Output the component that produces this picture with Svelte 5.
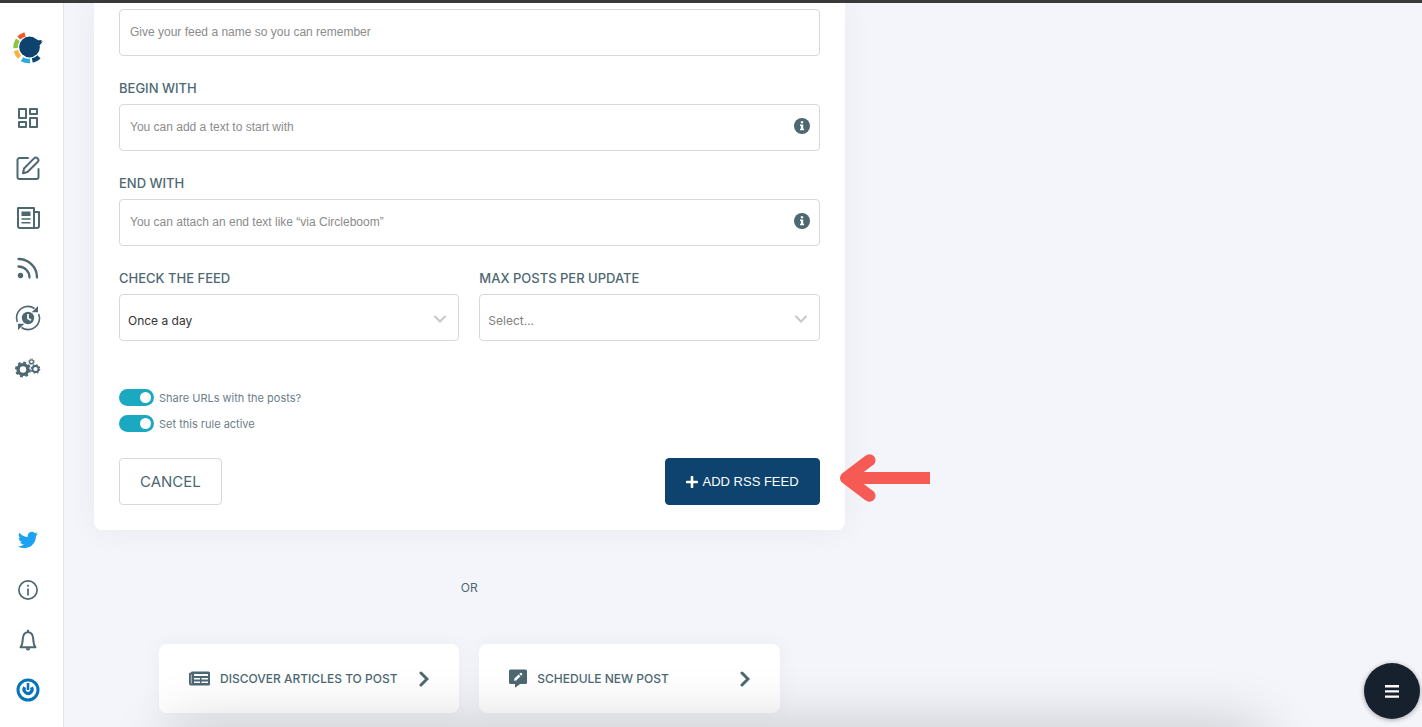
<script>
  let feedName = "";
  let beginWith = "";
  let endWith = "";
  let interval = "Once a day";
  let maxPosts = "";
  let shareUrls = true;
  let active = true;

  const intervals = ["Once a day", "Twice a day", "Every hour"];
  const limits = ["1", "2", "3", "5", "10"];
</script>

<div class="topbar"></div>
<div class="layout">
  <nav class="sidebar">
    <a href="#home" class="logo" aria-label="Home">
      <svg width="30" height="34" viewBox="0 0 30 34">
        <path fill="none" stroke="#f15a29" stroke-width="4.500" d="M5.800 7A13.500 13.500 0 0 1 12 3.300" />
        <path fill="none" stroke="#8cc63f" stroke-width="4.500" d="M2.600 17.200A13.500 13.500 0 0 1 4.800 8.800" />
        <path fill="none" stroke="#fbb03b" stroke-width="4.500" d="M6.500 26.300A13.500 13.500 0 0 1 3 19.500" />
        <path fill="none" stroke="#29abe2" stroke-width="4.500" d="M17 30A13.500 13.500 0 0 1 9 28.200" />
        <path fill="none" stroke="#0e4370" stroke-width="4.500" d="M26 25.800A13.500 13.500 0 0 1 19.300 29.500" />
        <circle cx="16.500" cy="16" r="10.400" fill="#0e4370" />
        <path fill="#0e4370" d="M22 7.500 25 9.200 29 9 27.800 10.600 29.800 10.500 26.500 14.500Z" />
      </svg>
    </a>

    <a href="#dashboard" aria-label="Dashboard">
      <svg width="22" height="22" viewBox="0 0 22 22" fill="none" stroke="currentColor" stroke-width="2" stroke-linejoin="round">
        <path d="M2 2h7v9H2zM13 2h7v5h-7zM2 15h7v5H2zM13 11h7v9h-7z" />
      </svg>
    </a>
    <a href="#compose" aria-label="Create post">
      <svg width="24" height="24" viewBox="0 0 24 24" fill="none" stroke="currentColor" stroke-width="2" stroke-linecap="round" stroke-linejoin="round">
        <path d="M12 2H3.500A2 2 0 0 0 1.500 4v17a2 2 0 0 0 2 2h17a2 2 0 0 0 2-2v-8" />
        <path d="M8 12.500 18 2.400a2.500 2.500 0 0 1 3.600 3.600L11.500 16 7 17.300z" />
      </svg>
    </a>
    <a href="#articles" aria-label="Articles">
      <svg width="24" height="24" viewBox="0 0 24 24" fill="none" stroke="currentColor" stroke-width="2" stroke-linejoin="round">
        <path d="M18 22V2H2v18a2 2 0 0 0 2 2h17a2 2 0 0 0 2-2V6h-5" />
        <path fill="currentColor" stroke="none" d="M5.500 5.500h9v4.500h-9zM5.500 12.200h9v1.600h-9zM5.500 16h9v1.600h-9z" />
      </svg>
    </a>
    <a href="#rss" aria-label="RSS feeds">
      <svg width="22" height="22" viewBox="0 0 22 22" fill="none" stroke="currentColor" stroke-width="2.300">
        <circle cx="3.500" cy="18.500" r="2.700" fill="currentColor" stroke="none" />
        <path d="M1.500 9.500A11 11 0 0 1 12.500 20.500M1.500 2A18.500 18.500 0 0 1 20 20.500" stroke-linecap="round" />
      </svg>
    </a>
    <a href="#queue" aria-label="Queue">
      <svg width="26" height="26" viewBox="0 0 26 26">
        <circle cx="13" cy="13" r="6.200" fill="currentColor" />
        <path d="M13 9v4.500l3 1.800" fill="none" stroke="#fff" stroke-width="1.700" />
        <path d="M2.300 17A11.400 11.400 0 0 1 19.500 3.500M23.700 9A11.400 11.400 0 0 1 6.500 22.500" fill="none" stroke="currentColor" stroke-width="1.600" />
        <path fill="currentColor" d="M23 1V7.300h-6.300zM3 25V18.700h6.300z" />
      </svg>
    </a>
    <a href="#settings" aria-label="Settings">
      <svg width="26" height="20" viewBox="0 0 26 20" fill="none" stroke="currentColor">
        <circle cx="8" cy="11.500" r="4.900" stroke-width="3.400" />
        <circle cx="8" cy="11.500" r="7" stroke-width="2" stroke-dasharray="2.900 2.600" />
        <circle cx="20.500" cy="11" r="3" stroke-width="1.800" />
        <circle cx="20.500" cy="11" r="4.200" stroke-width="1.200" stroke-dasharray="1.700 1.600" />
        <circle cx="16.500" cy="3.700" r="1.900" stroke-width="1.200" />
        <circle cx="16.500" cy="3.700" r="2.800" stroke-width=".8" stroke-dasharray="1.200 1" />
      </svg>
    </a>

    <div class="spacer"></div>

    <a href="#twitter" aria-label="Twitter">
      <svg width="20" height="20" viewBox="0 0 24 24" fill="#1da1f2">
        <path d="M23.950 4.570a10 10 0 0 1-2.820.78 4.960 4.960 0 0 0 2.160-2.730 9.900 9.900 0 0 1-3.120 1.190 4.920 4.920 0 0 0-8.390 4.490A14 14 0 0 1 1.640 3.160a4.920 4.920 0 0 0 1.520 6.570 4.900 4.900 0 0 1-2.230-.61v.06a4.920 4.920 0 0 0 3.950 4.830 5 5 0 0 1-2.210.08 4.940 4.940 0 0 0 4.600 3.420A9.870 9.870 0 0 1 0 19.540a13.990 13.990 0 0 0 7.550 2.210c9.050 0 14-7.500 14-13.980 0-.21 0-.42-.02-.63a9.940 9.940 0 0 0 2.420-2.570z" />
      </svg>
    </a>
    <a href="#help" aria-label="Help">
      <svg width="20" height="20" viewBox="0 0 20 20" fill="none" stroke="currentColor" stroke-width="1.700">
        <circle cx="10" cy="10" r="9.100" />
        <path d="M10 8.500v7M10 4.700v2" />
      </svg>
    </a>
    <a href="#notifications" aria-label="Notifications">
      <svg width="18" height="22" viewBox="0 0 18 22" fill="none" stroke="currentColor" stroke-width="2" stroke-linejoin="round">
        <path d="M1.500 18.300C4 15.500 3.500 12.500 3.800 9.500 4.200 5.500 6 3.200 9 3.200s4.800 2.300 5.200 6.300c.3 3-.2 6 2.300 8.800z" />
        <path d="M9 3.200V.8" />
        <path fill="currentColor" stroke="none" d="M6.700 19.200h4.600a2.300 2.300 0 0 1-4.600 0z" />
      </svg>
    </a>
    <a href="#account" aria-label="Account">
      <svg width="24" height="24" viewBox="0 0 24 24" fill="none" stroke="#0873b9">
        <circle cx="12" cy="12" r="10" stroke-width="3" />
        <path d="M8.700 9.200a4 4 0 1 0 6.800.1" stroke-width="3.200" />
        <path d="M12 5v7" stroke-width="2.600" />
      </svg>
    </a>
  </nav>

  <main>
    <div class="column">
      <form class="card" on:submit|preventDefault>
        <div class="field">
          <input id="feedName" class="control" aria-label="Feed name" bind:value={feedName} placeholder="Give your feed a name so you can remember" />
        </div>
        <div class="field">
          <label for="beginWith">BEGIN WITH</label>
          <div class="control-wrap">
            <input id="beginWith" class="control" bind:value={beginWith} placeholder="You can add a text to start with" />
            <svg class="info" width="16" height="16" viewBox="0 0 16 16">
              <circle cx="8" cy="8" r="8" fill="#4e6872" />
              <path fill="#fff" d="M6.800 3.200h2.400v2H6.800zM6 6.500h3.200v4.300h.9v1.500H6v-1.500h.9V8H6z" />
            </svg>
          </div>
        </div>
        <div class="field">
          <label for="endWith">END WITH</label>
          <div class="control-wrap">
            <input id="endWith" class="control" bind:value={endWith} placeholder="You can attach an end text like “via Circleboom”" />
            <svg class="info" width="16" height="16" viewBox="0 0 16 16">
              <circle cx="8" cy="8" r="8" fill="#4e6872" />
              <path fill="#fff" d="M6.800 3.200h2.400v2H6.800zM6 6.500h3.200v4.300h.9v1.500H6v-1.500h.9V8H6z" />
            </svg>
          </div>
        </div>
        <div class="row">
          <div class="field">
            <label for="interval">CHECK THE FEED</label>
            <div class="control-wrap">
              <select id="interval" class="control" bind:value={interval}>
                {#each intervals as item}
                  <option value={item}>{item}</option>
                {/each}
              </select>
              <svg class="chevron" width="14" height="8" viewBox="0 0 14 8">
                <path d="M2 1.500l5 5 5-5" />
              </svg>
            </div>
          </div>
          <div class="field">
            <label for="maxPosts">MAX POSTS PER UPDATE</label>
            <div class="control-wrap">
              <select id="maxPosts" class="control" class:empty={!maxPosts} bind:value={maxPosts}>
                <option value="">Select...</option>
                {#each limits as item}
                  <option value={item}>{item}</option>
                {/each}
              </select>
              <svg class="chevron" width="14" height="8" viewBox="0 0 14 8">
                <path d="M2 1.500l5 5 5-5" />
              </svg>
            </div>
          </div>
        </div>

        <div class="switches">
          <label class="switch">
            <input type="checkbox" bind:checked={shareUrls} />
            Share URLs with the posts?
          </label>
          <label class="switch">
            <input type="checkbox" bind:checked={active} />
            Set this rule active
          </label>
        </div>

        <div class="actions">
          <button type="button" class="btn cancel">CANCEL</button>
          <button type="submit" class="btn add">
            <svg width="12" height="12" viewBox="0 0 12 12">
              <path d="M6 1v10M1 6h10" stroke="#fff" stroke-width="2.600" stroke-linecap="round" />
            </svg>
            ADD RSS FEED
          </button>
        </div>
        <svg class="arrow" width="91" height="48" viewBox="0 0 91 48">
          <path d="M91 24H12M30 6.500 7 24l23 17.500" fill="none" stroke="#f65a55" stroke-width="12" stroke-linejoin="round" />
          <circle cx="30.500" cy="6.300" r="6" fill="#f65a55" />
          <circle cx="30.500" cy="41.700" r="6" fill="#f65a55" />
        </svg>
      </form>

      <p class="or">OR</p>

      <div class="links">
        <a href="#discover" class="link-card">
          <svg width="21" height="15" viewBox="0 0 21 15">
            <path fill="#4e6872" d="M3 .5h16.500A1.500 1.500 0 0 1 21 2v11a1.500 1.500 0 0 1-1.500 1.500H2A2 2 0 0 1 0 12.500V3a1.500 1.500 0 0 1 1.500-1.500H2A1.500 1.500 0 0 1 3 .5z" />
            <path fill="#fff" d="M5 3h14v2H5zM5 7h6v1.500H5zM12.500 7H19v1.500h-6.500zM5 10.500h6V12H5zM12.500 10.500H19V12h-6.500z" />
            <path stroke="#b9c5ca" d="M2.300 3.500v9" />
          </svg>
          <span>DISCOVER ARTICLES TO POST</span>
          <svg class="next" width="10" height="16" viewBox="0 0 10 16">
            <path d="M2 2l6 6-6 6" />
          </svg>
        </a>
        <a href="#schedule" class="link-card">
          <svg width="18" height="19" viewBox="0 0 18 19">
            <path fill="#4e6872" d="M1.500.5h15A1.500 1.500 0 0 1 18 2v11.500a1.500 1.500 0 0 1-1.500 1.500H11l-5 3.800V15H1.500A1.500 1.500 0 0 1 0 13.500V2A1.500 1.500 0 0 1 1.500.5z" />
            <path fill="#fff" d="M5 11.800l.4-2.300 4.200-4.100 1.900 1.900-4.200 4.100zM10.300 4.800l.8-.7a1 1 0 0 1 1.400 0l.5.500a1 1 0 0 1 0 1.400l-.8.7z" />
          </svg>
          <span>SCHEDULE NEW POST</span>
          <svg class="next" width="10" height="16" viewBox="0 0 10 16">
            <path d="M2 2l6 6-6 6" />
          </svg>
        </a>
      </div>
    </div>
  </main>
</div>

<div class="bottom-shade"></div>
<button class="fab" aria-label="Menu">
  <svg width="14" height="13" viewBox="0 0 14 13">
    <path fill="#fff" d="M0 0h14v2.400H0zM0 5.200h14v2.400H0zM0 10.400h14v2.400H0z" />
  </svg>
</button>

<style>
  :global(body) {
    background-color: #f4f5fa;
    color: #4e6872;
    font-family: Inter, "Liberation Sans", sans-serif;
    font-size: 13px;
    line-height: 16px;
  }

  * {
    box-sizing: border-box;
  }

  .topbar {
    height: 3px;
    background-color: #3a3a3a;
  }

  .layout {
    display: flex;
    min-height: calc(100vh - 3px);
  }

  .sidebar {
    display: flex;
    flex-direction: column;
    flex: 0 0 64px;
    padding: 20px 7px 12px 0;
    background-color: white;
    border-right: 1px solid #dfe3ee;
  }
  .sidebar a {
    display: flex;
    align-items: center;
    justify-content: center;
    height: 50px;
    color: #4e6872;
  }
  .sidebar .logo {
    margin-bottom: 20px;
  }
  .spacer {
    flex: 1;
  }

  main {
    flex: 1;
    display: grid;
    grid-template-columns: 13fr 10fr;
    align-items: start;
    padding-left: 30px;
  }

  .card {
    position: relative;
    padding: 6px 25px 25px;
    background-color: white;
    border-radius: 0 0 8px 8px;
    box-shadow: 0 0 30px rgba(60, 70, 100, 0.06);
  }

  .field {
    display: flex;
    flex-direction: column;
    gap: 8px;
    margin-bottom: 24px;
  }
  .field label {
    font-weight: 500;
  }

  .row {
    display: grid;
    grid-template-columns: 1fr 1fr;
    gap: 20px;
  }

  .control-wrap {
    position: relative;
  }

  .control {
    display: block;
    width: 100%;
    height: 47px;
    padding: 0 40px 2px 10px;
    border: 1px solid #d3d9dc;
    border-radius: 4px;
    background-color: white;
    color: #333;
    font-family: "Liberation Sans", Arial, sans-serif;
    font-size: 12px;
    outline: none;
  }
  .control::placeholder {
    color: #8b8b8b;
  }
  .control:focus {
    border-color: #0e4370;
  }
  select.control {
    appearance: none;
    padding: 6px 30px 0 8px;
    font-family: Inter, "Liberation Sans", sans-serif;
  }
  select.empty {
    color: #808080;
  }

  .info,
  .chevron {
    position: absolute;
    pointer-events: none;
  }
  .info {
    top: 14px;
    right: 10px;
  }
  .chevron {
    top: 21px;
    right: 12px;
  }
  .chevron path {
    fill: none;
    stroke: #c8c8c8;
    stroke-width: 2;
    stroke-linecap: round;
  }

  .switches {
    display: flex;
    flex-direction: column;
    align-items: flex-start;
    gap: 9px;
    margin: 24px 0 26px;
  }
  .switch {
    display: flex;
    align-items: center;
    gap: 5px;
    height: 17px;
    color: #6b8089;
    font-size: 11px;
  }
  .switch input {
    appearance: none;
    display: flex;
    align-items: center;
    width: 35px;
    height: 17px;
    margin: 0;
    padding: 0 3px;
    border-radius: 9px;
    background-color: #b9c5ca;
  }
  .switch input::before {
    content: "";
    width: 11px;
    height: 11px;
    border-radius: 50%;
    background-color: white;
  }
  .switch input:checked {
    justify-content: flex-end;
    background-color: #1ba9c1;
  }

  .actions {
    display: flex;
    justify-content: space-between;
  }
  .btn {
    display: flex;
    align-items: center;
    gap: 5px;
    height: 47px;
    padding: 0 20px;
    border: 1px solid #d3d9dc;
    border-radius: 4px;
    cursor: pointer;
  }
  .cancel {
    background-color: white;
    color: #4e6872;
    font-family: Inter, "Liberation Sans", sans-serif;
    font-size: 15px;
  }
  .add {
    border-color: #0e4370;
    background-color: #0e4370;
    color: white;
    font-family: "Liberation Sans", Arial, sans-serif;
    font-size: 13px;
  }

  .arrow {
    position: absolute;
    left: calc(100% - 6px);
    bottom: 28px;
  }

  .or {
    margin: 50px 0 48px;
    text-align: center;
    font-size: 12px;
  }

  .links {
    display: grid;
    grid-template-columns: 1fr 1fr;
    gap: 20px;
    padding: 0 65px;
  }
  .link-card {
    display: flex;
    align-items: center;
    gap: 10px;
    height: 69px;
    padding: 0 30px;
    border-radius: 8px;
    background-color: white;
    box-shadow: 0 0 20px rgba(60, 70, 100, 0.05);
    color: #4e6872;
    font-size: 12px;
    font-weight: 500;
    text-decoration: none;
    white-space: nowrap;
  }
  .next {
    margin-left: auto;
    fill: none;
    stroke: #4e6872;
    stroke-width: 3;
    stroke-linecap: round;
  }

  /* shadow of the panel docked under the window */
  .bottom-shade {
    position: fixed;
    top: 100%;
    left: 170px;
    right: 160px;
    height: 60px;
    box-shadow: 0 0 60px rgba(0, 0, 0, 0.2);
    pointer-events: none;
  }

  .fab {
    position: fixed;
    right: 2px;
    bottom: 8px;
    display: flex;
    align-items: center;
    justify-content: center;
    width: 56px;
    height: 56px;
    border: none;
    border-radius: 50%;
    background-color: #17212d;
    box-shadow: 0 1px 5px rgba(0, 0, 0, 0.35);
    cursor: pointer;
  }
</style>
